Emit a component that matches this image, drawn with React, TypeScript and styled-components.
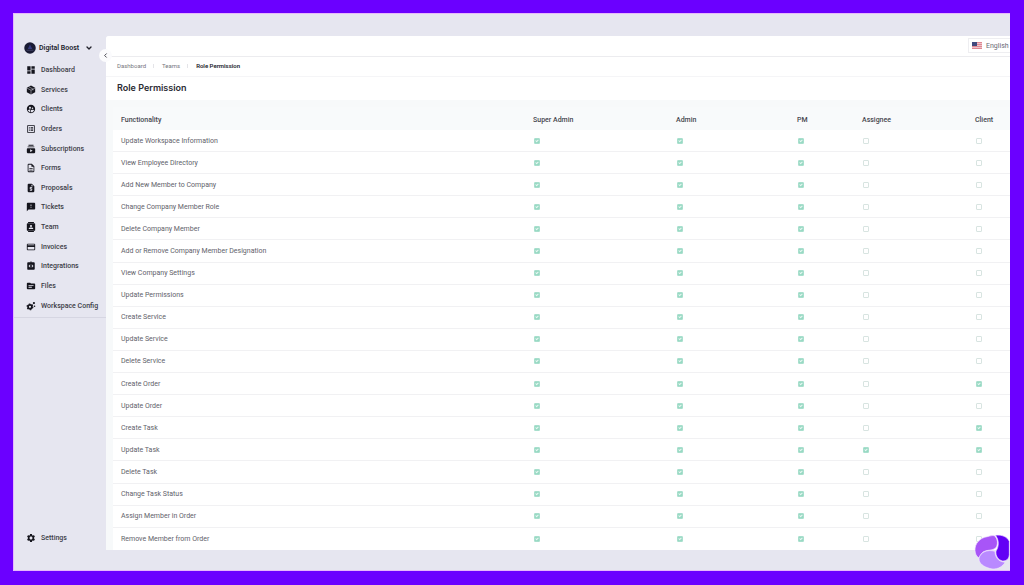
import React from "react";
import styled, { createGlobalStyle } from "styled-components";
import {
  MdDashboard,
  MdSupervisedUserCircle,
  MdOutlineListAlt,
  MdSubscriptions,
  MdOutlineDescription,
  MdRequestQuote,
  MdFeedback,
  MdOutlineCreditCard,
  MdIntegrationInstructions,
  MdTopic,
  MdSettings,
} from "react-icons/md";
import { ChevronDown, ChevronLeft } from "lucide-react";

const GlobalStyle = createGlobalStyle`
  *, *::before, *::after { box-sizing: border-box; }
  body { margin: 0; background: #6b00ff; }
  body, button, input { font-family: Roboto, "Liberation Sans", sans-serif; }
`;

const Frame = styled.div`
  min-height: 100vh;
  padding: 13px 14px 14px 13px;
  background: #6b00ff;
  display: flex;
`;

const Shell = styled.div`
  position: relative;
  flex: 1;
  min-width: 0;
  display: flex;
  padding: 22px 0 20px;
  background: #e6e6f0;
  border: 1px solid #e6b8fc;
  border-right: 0;
`;

const Sidebar = styled.aside`
  width: 92px;
  flex: none;
  display: flex;
  flex-direction: column;
`;

const Workspace = styled.button`
  display: flex;
  align-items: center;
  height: 24px;
  padding: 0 0 0 10px;
  border: 0;
  background: none;
  color: #22222c;
  font-size: 7px;
  font-weight: 600;
  line-height: 10px;
  white-space: nowrap;
  svg:first-child { margin-right: 3px; }
  svg:last-child { margin-left: 6px; }
`;

const Nav = styled.nav`
  display: flex;
  flex-direction: column;
  justify-content: space-between;
  min-height: 43vh;
  margin-top: 2px;
`;

const NavLink = styled.a`
  display: flex;
  align-items: center;
  gap: 5px;
  height: 16px;
  padding-left: 12px;
  color: #3c3c46;
  font-size: 7px;
  font-weight: 500;
  line-height: 10px;
  text-decoration: none;
  white-space: nowrap;
  svg { flex: none; color: #15151d; }
`;

const SidebarRule = styled.hr`
  width: 100%;
  margin: 3px 0 auto;
  border: 0;
  border-top: 1px solid #d6d6e2;
`;

const SettingsArea = styled.div`
  padding-bottom: 4px;
`;

const Collapse = styled.button`
  position: absolute;
  top: 35px;
  left: 85px;
  width: 13px;
  height: 13px;
  padding: 0;
  display: grid;
  place-items: center;
  border: 0;
  border-radius: 50%;
  background: #fbfbfd;
  color: #33333d;
`;

const Main = styled.main`
  flex: 1;
  min-width: 0;
  display: flex;
  flex-direction: column;
  background: #f7f9fa;
  border-top-left-radius: 3px;
  overflow: hidden;
`;

const TopBar = styled.header`
  display: flex;
  justify-content: flex-end;
  align-items: flex-start;
  height: 21px;
  padding-top: 2px;
  background: #fff;
  border-bottom: 1px solid #ececef;
`;

const Language = styled.button`
  display: flex;
  align-items: center;
  gap: 4px;
  width: 42px;
  height: 15px;
  padding: 0 0 0 3px;
  border: 1px solid #eeeef1;
  border-right: 0;
  background: #fff;
  color: #6a6a74;
  font-size: 7px;
  line-height: 10px;
  svg { flex: none; }
`;

const Breadcrumbs = styled.nav`
  display: flex;
  align-items: center;
  height: 20px;
  padding: 0 0 2px 11px;
  background: #fff;
  border-bottom: 1px solid #f5f5f7;
  font-size: 6px;
  line-height: 8px;
`;

const Crumb = styled.a<{ $current?: boolean }>`
  color: ${(p) => (p.$current ? "#25252d" : "#777780")};
  font-weight: ${(p) => (p.$current ? 600 : 400)};
  text-decoration: none;
`;

const Divider = styled.span`
  width: 1px;
  height: 4px;
  margin: 0 8px 0 7px;
  background: #e4e4e8;
`;

const Title = styled.h1`
  margin: 0;
  padding: 4px 11px 6px;
  background: #fff;
  color: #2b2b33;
  font-family: Inter, sans-serif;
  font-size: 9px;
  font-weight: 600;
  line-height: 13px;
`;

const TableArea = styled.section`
  flex: 1;
  display: flex;
  flex-direction: column;
  padding: 7px 0 0 7px;
`;

const Table = styled.table`
  flex: 1;
  width: 100%;
  table-layout: fixed;
  border-collapse: separate;
  border-spacing: 0;
  background: #fff;
  color: #62626a;
  font-size: 7px;
  line-height: 10px;
`;

const Column = styled.col<{ $width?: number }>`
  width: ${(p) => (p.$width ? `${p.$width}px` : "auto")};
`;

const HeadCell = styled.th`
  height: 23px;
  padding: 2px 0 0 8px;
  background: #f8fafb;
  color: #46464e;
  font-weight: 500;
  text-align: left;
  white-space: nowrap;
`;

const Cell = styled.td`
  height: 22px;
  padding: 0 0 0 8px;
  border-bottom: 1px solid #f1f1f3;
  white-space: nowrap;
  vertical-align: middle;
  tr:last-child > & { border-bottom: 0; }
`;

const NameCell = styled(Cell).attrs({ as: "th", scope: "row" })`
  font-weight: 400;
  text-align: left;
`;

const Tick = styled.input`
  appearance: none;
  position: relative;
  display: block;
  width: 6px;
  height: 6px;
  margin: 0 0 0 1px;
  border: 1px solid #d8e4e1;
  border-radius: 1px;
  background: #fff;
  &:checked {
    border-color: #a8dfcd;
    background: #98d9c3;
  }
  &:checked::after {
    content: "";
    position: absolute;
    left: 1px;
    top: 0;
    width: 2px;
    height: 3px;
    border: solid #e9f8f3;
    border-width: 0 1px 1px 0;
    transform: rotate(45deg);
  }
`;

const Brand = styled.div`
  position: absolute;
  right: 0;
  bottom: 0;
  width: 36px;
  height: 36px;
`;

type IconProps = { size: number };

const BoxIcon = ({ size }: IconProps) => (
  <svg width={size} height={size} viewBox="0 0 24 24" aria-hidden="true">
    <path d="M12 1 22 6.500v11L12 23 2 17.500v-11Z" fill="currentColor" />
    <path
      d="M2.500 7.500 12 12.500l9.500-5M12 12.500V23M7 4.500l9.500 5v3.500"
      fill="none"
      stroke="#e6e6f0"
      strokeWidth="1.200"
    />
  </svg>
);

const TeamIcon = ({ size }: IconProps) => (
  <svg width={size} height={size} viewBox="0 0 24 24" aria-hidden="true">
    <path d="M5 0h14v2.500H5ZM5 21.500h14V24H5Z" fill="currentColor" />
    <rect x="2" y="3" width="20" height="18" rx="2" fill="currentColor" />
    <circle cx="12" cy="9.500" r="2.600" fill="#e6e6f0" />
    <path d="M6.500 17c0-2.600 2.500-3.700 5.500-3.700s5.500 1.100 5.500 3.700Z" fill="#e6e6f0" />
  </svg>
);

const ConfigIcon = ({ size }: IconProps) => (
  <svg width={size} height={size} viewBox="0 0 24 24" aria-hidden="true">
    <circle cx="9.500" cy="14" r="4.700" fill="none" stroke="currentColor" strokeWidth="4.200" />
    <circle
      cx="9.500"
      cy="14"
      r="7"
      fill="none"
      stroke="currentColor"
      strokeWidth="2.600"
      strokeDasharray="3.700 3.630"
    />
    <circle cx="19" cy="5" r="2.700" fill="currentColor" />
    <circle cx="20.500" cy="12.500" r="1.900" fill="currentColor" />
  </svg>
);

const Avatar = () => (
  <svg width="12" height="12" viewBox="0 0 24 24" aria-hidden="true">
    <circle cx="12" cy="12" r="11.500" fill="#191a33" />
    <path d="M12 5 7.500 14h9Z" fill="#343a7c" />
    <path d="M5 16.500h14" stroke="#4a4c70" strokeWidth="1.500" />
  </svg>
);

const Flag = () => (
  <svg width="10" height="7" viewBox="0 0 20 14" aria-hidden="true">
    <rect width="20" height="14" fill="#efc3ca" />
    <path d="M0 1h20M0 5h20M0 9h20M0 13h20" stroke="#df8791" strokeWidth="2" />
    <rect width="10" height="8" fill="#414a7d" />
  </svg>
);

const BrandMark = () => (
  <svg width="36" height="36" viewBox="0 0 108 108" aria-hidden="true">
    <g stroke="#f1e6ff" strokeWidth="2" strokeLinejoin="round">
      <path
        d="M3 50C2 28 18 11 40 8c8-2 14-4 21-3 11 9 12 27 4 37-10 9-26 4-38 12-8 6-9 14-13 17C7 67 4 60 3 50Z"
        fill="#a855f7"
      />
      <path
        d="M64 4c20-3 36 5 42 18v40c-1 13-9 19-20 19-14-3-22-16-20-30 9-13 10-33-2-47Z"
        fill="#6300f5"
      />
      <path
        d="M15 73c4-18 25-28 48-21 0 16 9 30 26 32 6 0 2 6-2 9-10 11-28 15-41 10-17-5-32-14-31-30Z"
        fill="#b98aff"
      />
    </g>
  </svg>
);

const navItems = [
  { label: "Dashboard", Icon: MdDashboard },
  { label: "Services", Icon: BoxIcon },
  { label: "Clients", Icon: MdSupervisedUserCircle },
  { label: "Orders", Icon: MdOutlineListAlt },
  { label: "Subscriptions", Icon: MdSubscriptions },
  { label: "Forms", Icon: MdOutlineDescription },
  { label: "Proposals", Icon: MdRequestQuote },
  { label: "Tickets", Icon: MdFeedback },
  { label: "Team", Icon: TeamIcon },
  { label: "Invoices", Icon: MdOutlineCreditCard },
  { label: "Integrations", Icon: MdIntegrationInstructions },
  { label: "Files", Icon: MdTopic },
  { label: "Workspace Config", Icon: ConfigIcon },
];

const roles = ["Super Admin", "Admin", "PM", "Assignee", "Client"];
const staff = ["Super Admin", "Admin", "PM"];

const permissions: { name: string; extra?: string[] }[] = [
  { name: "Update Workspace Information" },
  { name: "View Employee Directory" },
  { name: "Add New Member to Company" },
  { name: "Change Company Member Role" },
  { name: "Delete Company Member" },
  { name: "Add or Remove Company Member Designation" },
  { name: "View Company Settings" },
  { name: "Update Permissions" },
  { name: "Create Service" },
  { name: "Update Service" },
  { name: "Delete Service" },
  { name: "Create Order", extra: ["Client"] },
  { name: "Update Order" },
  { name: "Create Task", extra: ["Client"] },
  { name: "Update Task", extra: ["Assignee", "Client"] },
  { name: "Delete Task" },
  { name: "Change Task Status" },
  { name: "Assign Member in Order" },
  { name: "Remove Member from Order" },
];

export default function App() {
  return (
    <>
      <GlobalStyle />
      <Frame>
        <Shell>
          <Sidebar>
            <Workspace type="button">
              <Avatar />
              Digital Boost
              <ChevronDown size={8} strokeWidth={4} />
            </Workspace>
            <Nav aria-label="Workspace">
              {navItems.map(({ label, Icon }) => (
                <NavLink href="#" key={label}>
                  <Icon size={10} />
                  {label}
                </NavLink>
              ))}
            </Nav>
            <SidebarRule />
            <SettingsArea>
              <NavLink href="#">
                <MdSettings size={10} />
                Settings
              </NavLink>
            </SettingsArea>
          </Sidebar>
          <Main>
            <TopBar>
              <Language type="button">
                <Flag />
                English
              </Language>
            </TopBar>
            <Breadcrumbs aria-label="Breadcrumb">
              <Crumb href="#">Dashboard</Crumb>
              <Divider />
              <Crumb href="#">Teams</Crumb>
              <Divider />
              <Crumb href="#" $current aria-current="page">
                Role Permission
              </Crumb>
            </Breadcrumbs>
            <Title>Role Permission</Title>
            <TableArea>
              <Table>
                <colgroup>
                  <Column />
                  <Column $width={143} />
                  <Column $width={121} />
                  <Column $width={65} />
                  <Column $width={113} />
                  <Column $width={43} />
                </colgroup>
                <thead>
                  <tr>
                    <HeadCell scope="col">Functionality</HeadCell>
                    {roles.map((role) => (
                      <HeadCell scope="col" key={role}>
                        {role}
                      </HeadCell>
                    ))}
                  </tr>
                </thead>
                <tbody>
                  {permissions.map(({ name, extra = [] }) => (
                    <tr key={name}>
                      <NameCell>{name}</NameCell>
                      {roles.map((role) => (
                        <Cell key={role}>
                          <Tick
                            type="checkbox"
                            aria-label={`${name}: ${role}`}
                            defaultChecked={staff.includes(role) || extra.includes(role)}
                          />
                        </Cell>
                      ))}
                    </tr>
                  ))}
                </tbody>
              </Table>
            </TableArea>
          </Main>
          <Collapse type="button" aria-label="Collapse sidebar">
            <ChevronLeft size={7} strokeWidth={3} />
          </Collapse>
          <Brand>
            <BrandMark />
          </Brand>
        </Shell>
      </Frame>
    </>
  );
}
